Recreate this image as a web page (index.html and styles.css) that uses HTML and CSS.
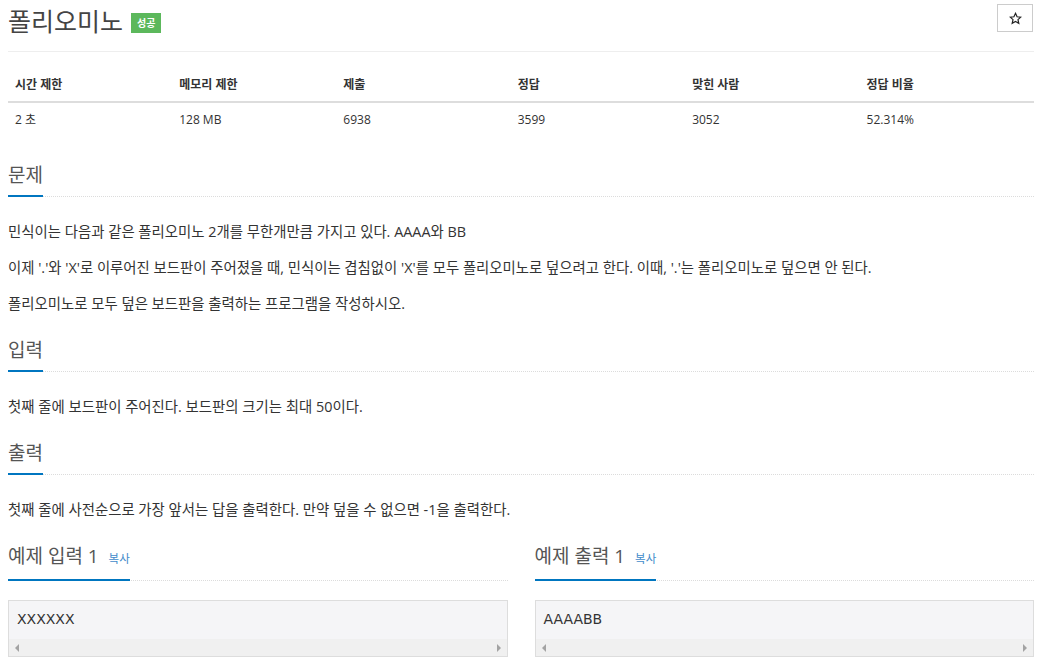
FILE: index.html
```html
<!DOCTYPE html>
<html lang="ko">
<head>
    <meta charset="UTF-8">
    <meta name="viewport" content="width=device-width, initial-scale=1.0">
    <title>폴리오미노</title>
    <link rel="stylesheet" href="styles.css">
</head>
<body>
    <div class="container">
        <div class="page-header">
            <h1 class="problem-title">
                <span>폴리오미노</span>
                <span class="label-success">성공</span>
            </h1>
            <button class="star-button" title="즐겨찾기">
                <svg width="13" height="13" viewBox="0 0 24 24"><path d="M12 2.5l2.9 6.3 6.8.7-5.1 4.6 1.5 6.8L12 17.4l-6.1 3.5 1.5-6.8-5.1-4.6 6.8-.7z" fill="none" stroke="#222" stroke-width="2.2" stroke-linejoin="miter"/></svg>
            </button>
        </div>

        <table class="problem-info">
            <thead>
                <tr>
                    <th class="col-a">시간 제한</th>
                    <th class="col-a">메모리 제한</th>
                    <th class="col-b">제출</th>
                    <th class="col-b">정답</th>
                    <th class="col-b">맞힌 사람</th>
                    <th>정답 비율</th>
                </tr>
            </thead>
            <tbody>
                <tr>
                    <td>2 초</td>
                    <td>128 MB</td>
                    <td>6938</td>
                    <td>3599</td>
                    <td>3052</td>
                    <td>52.314%</td>
                </tr>
            </tbody>
        </table>

        <section class="problem-section">
            <div class="headline"><h2>문제</h2></div>
            <div class="section-body">
                <p>민식이는 다음과 같은 폴리오미노 2개를 무한개만큼 가지고 있다. AAAA와 BB</p>
                <p>이제 '.'와 'X'로 이루어진 보드판이 주어졌을 때, 민식이는 겹침없이 'X'를 모두 폴리오미노로 덮으려고 한다. 이때, '.'는 폴리오미노로 덮으면 안 된다.</p>
                <p>폴리오미노로 모두 덮은 보드판을 출력하는 프로그램을 작성하시오.</p>
            </div>
        </section>

        <section class="problem-section">
            <div class="headline"><h2>입력</h2></div>
            <div class="section-body">
                <p>첫째 줄에 보드판이 주어진다. 보드판의 크기는 최대 50이다.</p>
            </div>
        </section>

        <section class="problem-section">
            <div class="headline"><h2>출력</h2></div>
            <div class="section-body">
                <p>첫째 줄에 사전순으로 가장 앞서는 답을 출력한다. 만약 덮을 수 없으면 -1을 출력한다.</p>
            </div>
        </section>

        <div class="samples">
            <section class="sample">
                <div class="headline"><h2>예제 입력 1 <a class="copy-link" href="#">복사</a></h2></div>
                <div class="sample-box">
                    <pre class="sample-data">XXXXXX</pre>
                    <div class="fake-scrollbar"><span class="arrow-left"></span><span class="arrow-right"></span></div>
                </div>
            </section>
            <section class="sample">
                <div class="headline"><h2>예제 출력 1 <a class="copy-link" href="#">복사</a></h2></div>
                <div class="sample-box">
                    <pre class="sample-data">AAAABB</pre>
                    <div class="fake-scrollbar"><span class="arrow-left"></span><span class="arrow-right"></span></div>
                </div>
            </section>
        </div>
    </div>
</body>
</html>
```

FILE: styles.css
```css
/* Base */
body {
    margin: 0;
    font-family: 'Open Sans', 'Noto Sans CJK KR', sans-serif;
    font-size: 14px;
    color: #333;
    background-color: #fff;
}

.container {
    margin: 0 9px 0 8px;
}

/* Title row */
.page-header {
    display: flex;
    justify-content: space-between;
    align-items: flex-start;
    padding: 4px 0 15px;
    border-bottom: 1px solid #eee;
}

.problem-title {
    display: flex;
    align-items: center;
    margin: 0;
    height: 32px;
    font-size: 25px;
    font-weight: normal;
    color: #444;
}

.label-success {
    display: inline-block;
    margin: 6px 0 0 8px;
    padding: 0 6px;
    height: 20px;
    line-height: 20px;
    font-size: 10px;
    font-weight: bold;
    color: #fff;
    background-color: #5cb85c;
}

.star-button {
    display: flex;
    align-items: center;
    justify-content: center;
    width: 36px;
    height: 28px;
    padding: 0;
    margin-right: 1px;
    border: 1px solid #ccc;
    background-color: #fff;
    cursor: pointer;
}

/* Info table */
.problem-info {
    width: 100%;
    margin: 16px 0 26px;
    border-collapse: collapse;
    font-size: 12px;
}

.problem-info th,
.problem-info td {
    text-align: left;
    padding: 8px 7px;
    line-height: 17px;
}

.problem-info th {
    font-weight: bold;
    border-bottom: 2px solid #ddd;
}

.col-a {
    width: 16%;
}

.col-b {
    width: 17%;
}

/* Sections */
.problem-section {
    padding-bottom: 7px;
}

.headline {
    display: flex;
    border-bottom: 1px dotted #dcdcdc;
}

.headline h2 {
    margin: 0 0 -1px;
    padding-bottom: 7px;
    font-size: 19px;
    line-height: 26px;
    font-weight: normal;
    color: #555;
    border-bottom: 2px solid #0076c0;
}

.section-body {
    padding-top: 25px;
}

.section-body p {
    margin: 0 0 16px;
    font-size: 14.4px;
    line-height: 20px;
}

/* Samples */
.samples {
    display: grid;
    grid-template-columns: 1fr 1fr;
    column-gap: 27px;
}

.copy-link {
    font-size: 11.5px;
    color: #428bca;
    text-decoration: none;
    margin-left: 5px;
}

.sample-box {
    margin-top: 19px;
    border: 1px solid #ddd;
    background-color: #f5f5f7;
}

.sample-data {
    margin: 0;
    padding: 8px 8px 10px;
    font-family: 'DejaVu Sans', sans-serif;
    font-size: 14px;
    line-height: 20px;
    color: #333;
}

.fake-scrollbar {
    display: flex;
    justify-content: space-between;
    align-items: center;
    height: 17px;
    padding: 0 6px;
    background-color: #f0f0f0;
}

.arrow-left,
.arrow-right {
    width: 0;
    height: 0;
    border-top: 4px solid transparent;
    border-bottom: 4px solid transparent;
}

.arrow-left {
    border-right: 4px solid #a3a3a3;
}

.arrow-right {
    border-left: 4px solid #a3a3a3;
}
```
